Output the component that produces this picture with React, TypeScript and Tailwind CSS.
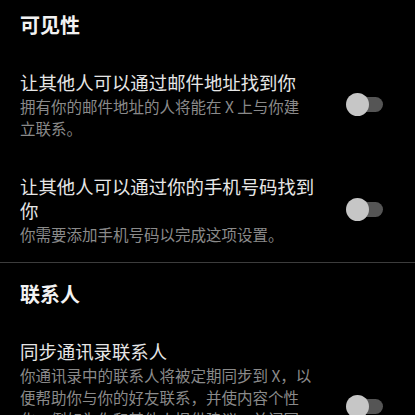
import React from 'react';

const font = { fontFamily: '"Noto Sans CJK SC", "Noto Sans", sans-serif' };

type Setting = {
  title: string[];
  desc: string[];
};

const Toggle = () => (
  <div className="relative w-[37px] h-[23px] shrink-0">
    <div className="absolute left-[2px] right-0 top-[4px] h-[15px] rounded-full bg-[#555555]" />
    <div className="absolute left-0 top-0 w-[23px] h-[23px] rounded-full bg-[#c6c6c6]" />
  </div>
);

const SettingRow = ({ item }: { item: Setting }) => (
  <div className="flex items-center justify-between pl-5 pr-[32px]">
    <div className="flex flex-col">
      {item.title.map((line) => (
        <span key={line} className="text-[18.4px] leading-[24px] text-[#e6e6e6] whitespace-nowrap">
          {line}
        </span>
      ))}
      <div className="mt-[1px] flex flex-col">
        {item.desc.map((line) => (
          <span key={line} className="text-[15.5px] leading-[22px] text-[#8a8a8a] whitespace-nowrap">
            {line}
          </span>
        ))}
      </div>
    </div>
    <Toggle />
  </div>
);

const SectionTitle = ({ children }: { children: React.ReactNode }) => (
  <h2 className="px-5 text-[20px] leading-[28px] font-bold text-[#f2f2f2]">{children}</h2>
);

export default function App() {
  const visibility: Setting[] = [
    {
      title: ['让其他人可以通过邮件地址找到你'],
      desc: ['拥有你的邮件地址的人将能在 X 上与你建', '立联系。'],
    },
    {
      title: ['让其他人可以通过你的手机号码找到', '你'],
      desc: ['你需要添加手机号码以完成这项设置。'],
    },
  ];

  const contacts: Setting = {
    title: ['同步通讯录联系人'],
    desc: [
      '你通讯录中的联系人将被定期同步到 X，以',
      '便帮助你与你的好友联系，并使内容个性',
      '化，例如为你和其他人提供建议。关闭同',
      '步不会删除你之前上传过的联系人。',
      '了解更多',
    ],
  };

  return (
    <div className="w-[415px] h-[415px] overflow-hidden bg-black" style={font}>
      {/* 可见性 */}
      <div className="pt-[11px] pb-[17px]">
        <SectionTitle>可见性</SectionTitle>
        <div className="mt-[31px] flex flex-col gap-[35px]">
          {visibility.map((item) => (
            <SettingRow key={item.title[0]} item={item} />
          ))}
        </div>
      </div>

      <div className="h-px bg-[#3c3c3c]" />

      {/* 联系人 */}
      <div className="pt-[17px]">
        <SectionTitle>联系人</SectionTitle>
        <div className="mt-[31px]">
          <SettingRow item={contacts} />
        </div>
      </div>
    </div>
  );
}
